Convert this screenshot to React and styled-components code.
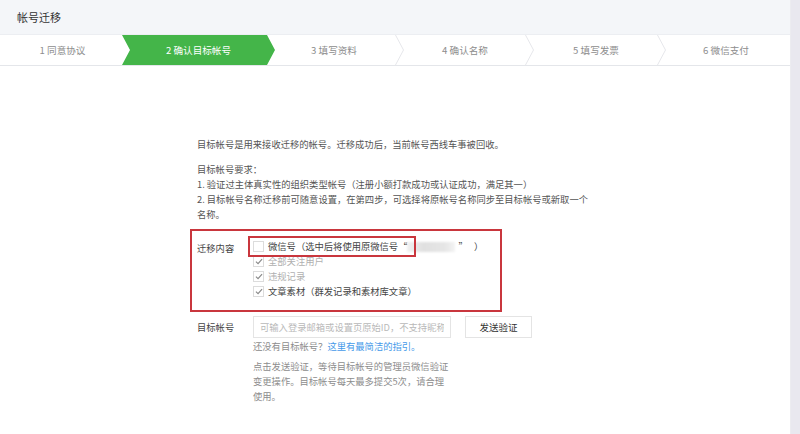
import React from "react";
import styled, { createGlobalStyle } from "styled-components";

const Global = createGlobalStyle`
  html, body {
    margin: 0;
    padding: 0;
    background: #fff;
  }
  body {
    font-family: "Noto Sans CJK SC", "Liberation Sans", sans-serif;
    font-size: 9.3px;
    color: #555;
  }
`;

const Page = styled.div`
  display: flex;
  width: 800px;
  height: 434px;
  overflow: hidden;
`;

const Main = styled.div`
  flex: 1;
  border-right: 1px solid #ececf0;
  display: flex;
  flex-direction: column;
`;

const Scroll = styled.div`
  width: 9px;
  background: #e9e8ef;
`;

const Header = styled.div`
  height: 35px;
  background: #f4f6f9;
  border-bottom: 1px solid #eceef2;
  display: flex;
  align-items: center;
  padding-left: 17px;
  font-size: 11px;
  color: #333;
  box-sizing: border-box;
`;

const Steps = styled.div`
  display: grid;
  grid-template-columns: 125px 143px 132px 130px 132px 1fr;
  height: 30px;
  border-bottom: 1px solid #e4e6ea;
`;

const Step = styled.div`
  position: relative;
  display: flex;
  align-items: center;
  justify-content: center;
  color: ${(p) => (p.$active ? "#fff" : "#8d8d8d")};
  font-size: 9.6px;
  z-index: ${(p) => (p.$active ? 1 : 0)};
  ${(p) =>
    p.$active &&
    `
    margin-left: -3px;
    margin-right: -7px;
    background: #44b549;
    clip-path: polygon(0 0, calc(100% - 8px) 0, 100% 50%, calc(100% - 8px) 100%, 0 100%, 8px 50%);
  `}
`;

const Chevron = styled.svg`
  position: absolute;
  right: -4px;
  top: 0;
  width: 9px;
  height: 30px;
`;

const Body = styled.div`
  padding: 71px 0 0 197px;
  line-height: 15px;
`;

const Para = styled.p`
  margin: 0 0 ${(p) => p.$gap || 0}px;
  color: #555;
  width: ${(p) => p.$w || "auto"};
`;

const RedBox = styled.div`
  margin: 7px 0 0 -7px;
  width: 312px;
  border: 2px solid #c9363d;
  box-sizing: border-box;
  padding: 8px 0 11px 5px;
  display: flex;
`;

const Label = styled.div`
  width: 56px;
  flex-shrink: 0;
  color: #444;
  padding-top: ${(p) => p.$top || 0}px;
`;

const Options = styled.div`
  position: relative;
  display: flex;
  flex-direction: column;
`;

const Mark = styled.div`
  position: absolute;
  left: -5px;
  top: -3px;
  width: 168px;
  height: 21px;
  border: 2px solid #c9363d;
  box-sizing: border-box;
`;

const Option = styled.label`
  display: flex;
  align-items: center;
  height: 15px;
  color: ${(p) => (p.$disabled ? "#b0b0b0" : "#444")};
  white-space: nowrap;
`;

const Box = styled.span`
  width: 11px;
  height: 11px;
  box-sizing: border-box;
  border: 1px solid #dcdcdc;
  background: #fff;
  margin-right: 4px;
  flex-shrink: 0;
  display: flex;
  align-items: center;
  justify-content: center;
`;

const Blur = styled.span`
  display: inline-block;
  width: 48px;
  height: 10px;
  margin: 0 3px 0 0;
  background: linear-gradient(90deg, #f1f1f1, #e0e0e0 35%, #e6e6e6 80%, #f4f4f4);
  filter: blur(1px);
`;

const FieldRow = styled.div`
  display: flex;
  align-items: flex-start;
  margin-top: 4px;
`;

const Field = styled.div`
  display: flex;
  flex-direction: column;
`;

const InputRow = styled.div`
  display: flex;
  gap: 14px;
`;

const Input = styled.input`
  width: 198px;
  height: 22px;
  box-sizing: border-box;
  border: 1px solid #e4e4e4;
  padding: 0 6px;
  font-family: inherit;
  font-size: 9.3px;
  color: #555;
  outline: none;
  &::placeholder {
    color: #b9b9b9;
  }
`;

const Button = styled.button`
  width: 67px;
  height: 22px;
  border: 1px solid #e4e4e4;
  background: #fff;
  font-family: inherit;
  font-size: 9.5px;
  color: #333;
  padding: 0;
`;

const Hint = styled.div`
  color: #8d8d8d;
  width: ${(p) => p.$w || "auto"};
  margin-top: ${(p) => p.$mt || 0}px;
`;

const Link = styled.a`
  color: #459ae9;
  text-decoration: none;
`;

const Check = () => (
  <svg width="8" height="7" viewBox="0 0 9 8">
    <path d="M1 4.2 L3.4 6.5 L8 1.2" fill="none" stroke="#888" strokeWidth="1.3" />
  </svg>
);

const steps = ["1 同意协议", "2 确认目标帐号", "3 填写资料", "4 确认名称", "5 填写发票", "6 微信支付"];

export default function App() {
  return (
    <Page>
      <Global />
      <Main>
        <Header>帐号迁移</Header>
        <Steps>
          {steps.map((s, i) => (
            <Step key={s} $active={i === 1}>
              {s}
              {i > 1 && i < 5 && (
                <Chevron viewBox="0 0 9 30">
                  <path d="M0.5 0 L8.5 15 L0.5 30" fill="none" stroke="#e6e7eb" strokeWidth="1" />
                </Chevron>
              )}
            </Step>
          ))}
        </Steps>
        <Body>
          <Para $gap={10}>目标帐号是用来接收迁移的帐号。迁移成功后，当前帐号西线车事被回收。</Para>
          <Para>目标帐号要求：</Para>
          <Para>1. 验证过主体真实性的组织类型帐号（注册小额打款成功或认证成功，满足其一）</Para>
          <Para $w="400px">2. 目标帐号名称迁移前可随意设置，在第四步，可选择将原帐号名称同步至目标帐号或新取一个名称。</Para>
          <RedBox>
            <Label $top={2}>迁移内容</Label>
            <Options>
              <Option>
                <Box />
                微信号（选中后将使用原微信号“
                <Blur />
                ”&nbsp;&nbsp;&nbsp;）
              </Option>
              <Option $disabled>
                <Box>
                  <Check />
                </Box>
                全部关注用户
              </Option>
              <Option $disabled>
                <Box>
                  <Check />
                </Box>
                违规记录
              </Option>
              <Option>
                <Box>
                  <Check />
                </Box>
                文章素材（群发记录和素材库文章）
              </Option>
              <Mark />
            </Options>
          </RedBox>
          <FieldRow>
            <Label $top={4}>目标帐号</Label>
            <Field>
              <InputRow>
                <Input placeholder="可输入登录邮箱或设置页原始ID，不支持昵称" />
                <Button>发送验证</Button>
              </InputRow>
              <Hint $mt={1}>
                还没有目标帐号？<Link href="#">这里有最简洁的指引。</Link>
              </Hint>
              <Hint $mt={5} $w="200px">
                点击发送验证，等待目标帐号的管理员微信验证变更操作。目标帐号每天最多提交5次，请合理使用。
              </Hint>
            </Field>
          </FieldRow>
        </Body>
      </Main>
      <Scroll />
    </Page>
  );
}
